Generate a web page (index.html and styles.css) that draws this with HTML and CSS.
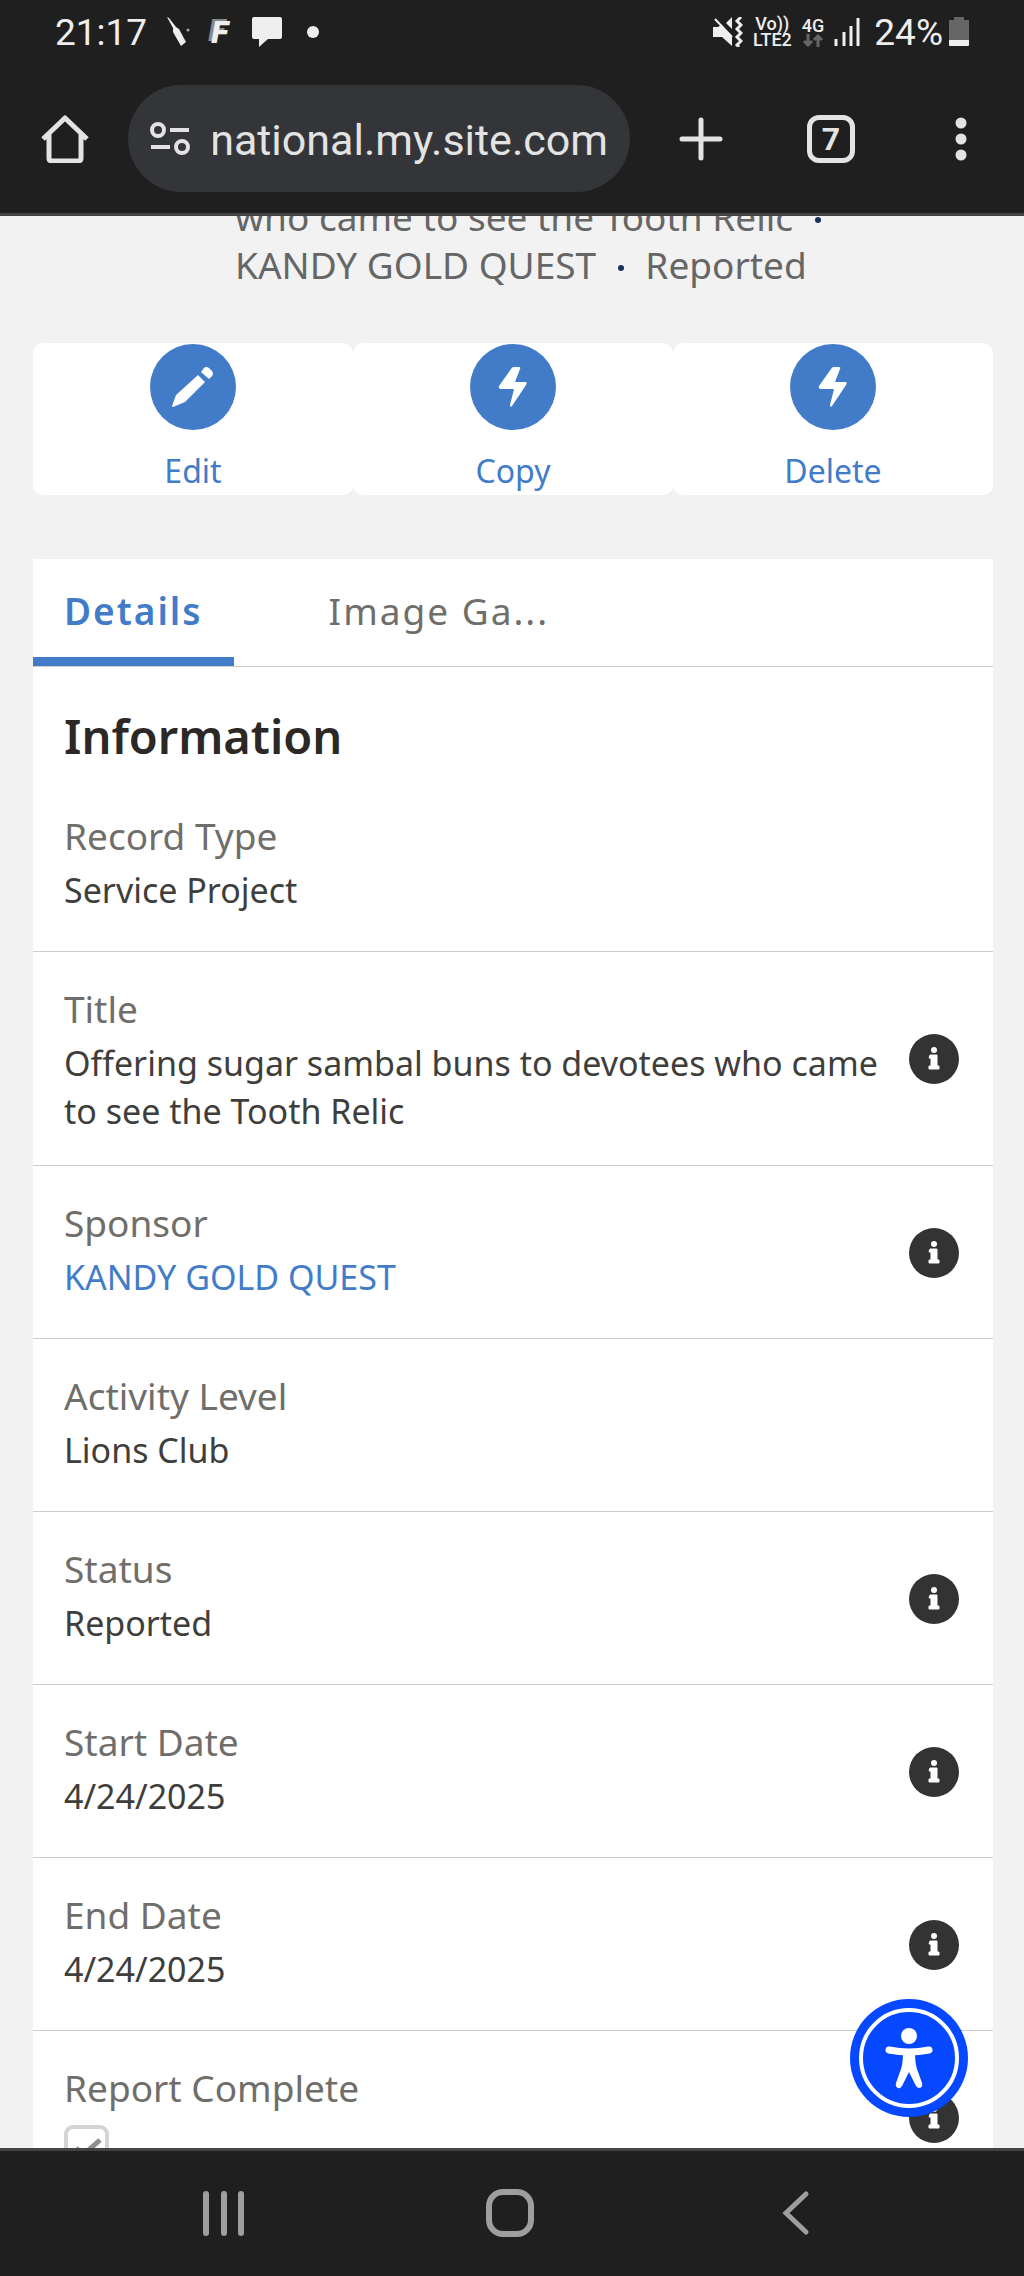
FILE: index.html
```html
<!DOCTYPE html>
<html lang="en">
<head>
    <meta charset="UTF-8">
    <meta name="viewport" content="width=device-width, initial-scale=1.0">
    <title>Service Project</title>
    <link rel="stylesheet" href="styles.css">
</head>
<body>
    <!-- shared icons -->
    <svg class="sprite" aria-hidden="true">
        <symbol id="info" viewBox="0 0 50 50">
            <circle cx="25" cy="25" r="25" fill="#333"/>
            <circle cx="25" cy="16" r="3" fill="#fff"/>
            <path d="M21 21h7v11h2v3H20v-3h2v-8h-2z" fill="#fff" stroke="#fff" stroke-linejoin="round"/>
        </symbol>
        <symbol id="bolt" viewBox="0 0 86 86">
            <path d="M44 23h5q2 0 1 2l-5 13h10q3 0 1 3L42 62q-2 2-2-1l4-16H31q-3 0-2-3l12-17q1-2 3-2z" fill="#fff"/>
        </symbol>
    </svg>

    <header class="top">
        <div class="status-bar">
            <span class="time">21:17</span>
            <svg class="s-pen" width="24" height="30" viewBox="0 0 24 30"><path d="M0 0L2 1 9 10 12 12 19 25 14 29 6 15 6 11z" fill="#eee"/><circle cx="21" cy="13" r="1.5" fill="#aaa"/></svg>
            <span class="s-f">F</span>
            <svg class="s-chat" width="30" height="30" viewBox="0 0 30 30"><path d="M2 0h26q2 0 2 2v18q0 2-2 2H16l-9 8v-8H2q-2 0-2-2V2q0-2 2-2z" fill="#eee"/></svg>
            <span class="s-dot"></span>
            <div class="status-right">
                <svg width="30" height="30" viewBox="0 0 30 30">
                    <path d="M0 10h5l3-2 11 11v10l-10-9H0zM13 6l6-6v12z" fill="#eee"/>
                    <path d="M2 2l17 18" stroke="#eee" stroke-width="2"/>
                    <path d="M28 0l-4 4 4 4-4 4 4 4-4 4 4 4-4 4 2 2" fill="none" stroke="#eee" stroke-width="3"/>
                </svg>
                <span class="lte"><span>Vo))</span><span>LTE2</span></span>
                <span class="net"><span>4G</span>
                    <svg width="20" height="13" viewBox="0 0 20 13"><path d="M5 0v11M1 7l4 4 4-4M15 13V2M11 6l4-4 4 4" fill="none" stroke="#666" stroke-width="3"/></svg>
                </span>
                <svg class="signal" width="26" height="28" viewBox="0 0 26 28"><path d="M2 28v-7M10 28V14M17 28V8M24 28V0" stroke="#eee" stroke-width="3"/></svg>
                <span class="time">24%</span>
                <svg class="battery" width="20" height="30" viewBox="0 0 20 30"><path d="M5 0h10v3h5v21H0V3h5z" fill="#666"/><path d="M0 23h20v5q0 1-1 1H1q-1 0-1-1z" fill="#eee"/></svg>
            </div>
        </div>
        <div class="toolbar">
            <button class="home-btn" aria-label="Home">
                <svg width="48" height="48" viewBox="0 0 48 48"><path d="M2 24L24 3l22 21M8 19v24q0 3 3 3h26q3 0 3-3V19" fill="none" stroke="#e3e3e3" stroke-width="5" stroke-linejoin="round"/></svg>
            </button>
            <div class="url-bar">
                <svg width="40" height="34" viewBox="0 0 40 34" fill="none" stroke="#e3e3e3" stroke-width="4"><circle cx="8" cy="8" r="6"/><path d="M20 8h19M1 25h19"/><circle cx="32" cy="25" r="6"/></svg>
                <input class="url" type="text" aria-label="Address" value="rnational.my.site.com">
            </div>
            <div class="toolbar-actions">
                <button aria-label="New tab"><svg width="44" height="44" viewBox="0 0 44 44"><path d="M22 3v38M3 22h38" stroke="#e3e3e3" stroke-width="5" stroke-linecap="round"/></svg></button>
                <button aria-label="Tabs"><span class="tab-count">7</span></button>
                <button aria-label="Menu"><svg width="12" height="44" viewBox="0 0 12 44" fill="#e3e3e3"><circle cx="6" cy="6" r="5.5"/><circle cx="6" cy="22" r="5.5"/><circle cx="6" cy="38" r="5.5"/></svg></button>
            </div>
        </div>
    </header>

    <main class="page">
        <p class="highlights">who came to see the Tooth Relic <b></b><br>KANDY GOLD QUEST <b></b> Reported</p>

        <div class="actions">
            <button class="action">
                <span class="action-icon"><svg width="86" height="86" viewBox="0 0 86 86"><path d="M48 31l7 7-20 20-12 5q-1 0-1-1l4-11zM51 28l3-4q2-2 5 0l3 3q2 3 0 5l-3 3z" fill="#fff"/></svg></span>
                Edit
            </button>
            <button class="action">
                <span class="action-icon"><svg width="86" height="86"><use href="#bolt"/></svg></span>
                Copy
            </button>
            <button class="action">
                <span class="action-icon"><svg width="86" height="86"><use href="#bolt"/></svg></span>
                Delete
            </button>
        </div>

        <section class="card">
            <div class="tabs" role="tablist">
                <button class="tab active" role="tab" aria-selected="true">Details</button>
                <button class="tab" role="tab" aria-selected="false">Image Ga...</button>
            </div>
            <h2>Information</h2>
            <div class="field">
                <div class="field-text"><div class="label">Record Type</div><div class="value">Service Project</div></div>
            </div>
            <div class="field">
                <div class="field-text"><div class="label">Title</div><div class="value">Offering sugar sambal buns to devotees who came to see the Tooth Relic</div></div>
                <button class="info" aria-label="Help Title"><svg width="50" height="50"><use href="#info"/></svg></button>
            </div>
            <div class="field">
                <div class="field-text"><div class="label">Sponsor</div><div class="value"><a href="#">KANDY GOLD QUEST</a></div></div>
                <button class="info" aria-label="Help Sponsor"><svg width="50" height="50"><use href="#info"/></svg></button>
            </div>
            <div class="field">
                <div class="field-text"><div class="label">Activity Level</div><div class="value">Lions Club</div></div>
            </div>
            <div class="field">
                <div class="field-text"><div class="label">Status</div><div class="value">Reported</div></div>
                <button class="info" aria-label="Help Status"><svg width="50" height="50"><use href="#info"/></svg></button>
            </div>
            <div class="field">
                <div class="field-text"><div class="label">Start Date</div><div class="value">4/24/2025</div></div>
                <button class="info" aria-label="Help Start Date"><svg width="50" height="50"><use href="#info"/></svg></button>
            </div>
            <div class="field">
                <div class="field-text"><div class="label">End Date</div><div class="value">4/24/2025</div></div>
                <button class="info" aria-label="Help End Date"><svg width="50" height="50"><use href="#info"/></svg></button>
            </div>
            <div class="field">
                <div class="field-text">
                    <label class="label" for="complete">Report Complete</label>
                    <div class="check">
                        <input type="checkbox" id="complete" checked disabled>
                        <svg class="tick" width="45" height="45" viewBox="0 0 45 45"><path d="M12 23l7 7 17-15" fill="none" stroke="#8e8e8e" stroke-width="5"/></svg>
                    </div>
                </div>
                <button class="info" aria-label="Help Report Complete"><svg width="50" height="50"><use href="#info"/></svg></button>
            </div>
        </section>
    </main>

    <nav class="bottom-nav">
        <button aria-label="Recent apps"><svg width="48" height="48" viewBox="0 0 48 48"><path d="M6 5v39M24 5v39M41 5v39" stroke="#9e9e9e" stroke-width="6" stroke-linecap="round"/></svg></button>
        <button aria-label="Home screen"><svg width="48" height="48" viewBox="0 0 48 48"><rect x="3" y="3" width="42" height="42" rx="14" fill="none" stroke="#9e9e9e" stroke-width="6"/></svg></button>
        <button aria-label="Back"><svg width="48" height="48" viewBox="0 0 48 48"><path d="M34 5L14 24l20 19" fill="none" stroke="#9e9e9e" stroke-width="5" stroke-linecap="round"/></svg></button>
    </nav>

    <button class="accessibility" aria-label="Accessibility">
        <svg width="118" height="118" viewBox="0 0 118 118">
            <circle cx="59" cy="59" r="59" fill="#0648ff"/>
            <circle cx="59" cy="59" r="48" fill="none" stroke="#fff" stroke-width="4"/>
            <circle cx="59" cy="37" r="8" fill="#fff"/>
            <path d="M39 51q20 4 40 0" fill="none" stroke="#fff" stroke-width="7" stroke-linecap="round"/>
            <path d="M53 53h12q0 11 2 17l5 14q1 4-2 5-3 0-4-2L59 73l-7 14q-2 3-4 2-3-1-2-5l5-14q2-6 2-17z" fill="#fff"/>
        </svg>
    </button>
</body>
</html>
```
FILE: styles.css
```css
* {
    box-sizing: border-box;
}
body {
    margin: 0;
    height: 100vh;
    display: flex;
    flex-direction: column;
    overflow: hidden;
    background-color: #f2f2f2;
    font-family: "Noto Sans", sans-serif;
}
button {
    padding: 0;
    border: none;
    background: none;
    font-family: inherit;
    cursor: pointer;
}
svg {
    display: block;
    flex-shrink: 0;
}
.sprite {
    display: none;
}

/* browser bars */
.top {
    background-color: #1f1f1f;
    border-bottom: 3px solid #444;
    font-family: Roboto, sans-serif;
    z-index: 1;
}
.status-bar {
    height: 64px;
    padding: 0 55px;
    display: flex;
    align-items: center;
    color: #eee;
}
.time {
    font-size: 37px;
}
.s-pen {
    margin-left: 20px;
}
.s-f {
    width: 27px;
    margin-left: 20px;
    font-size: 32px;
    font-weight: 900;
    font-style: italic;
    text-shadow: -3px -2px #888;
}
.s-chat {
    margin-left: 14px;
}
.s-dot {
    width: 12px;
    height: 12px;
    margin-left: 25px;
    border-radius: 50%;
    background-color: #eee;
}
.status-right {
    margin-left: auto;
    display: flex;
    align-items: center;
    gap: 10px;
}
.lte, .net {
    display: flex;
    flex-direction: column;
    align-items: center;
    font-size: 18px;
    font-weight: 500;
    line-height: 16px;
}
.signal {
    margin-right: 4px;
}
.battery {
    margin-left: -4px;
}
.toolbar {
    display: flex;
    align-items: center;
    padding: 21px 31px 21px 41px;
}
.url-bar {
    flex: 1;
    min-width: 0;
    height: 107px;
    margin: 0 39px;
    padding: 0 22px;
    display: flex;
    align-items: center;
    gap: 23px;
    border-radius: 54px;
    background-color: #343539;
}
/* long addresses keep their end in view */
.url {
    flex: 1;
    min-width: 0;
    padding: 2px 0 0;
    border: none;
    background: none;
    color: #e3e3e3;
    font-family: inherit;
    font-size: 43px;
    direction: rtl;
}
.toolbar-actions {
    display: flex;
    gap: 66px;
}
.toolbar-actions button {
    width: 64px;
    height: 64px;
    display: flex;
    align-items: center;
    justify-content: center;
}
.tab-count {
    width: 48px;
    height: 48px;
    border: 5px solid #e3e3e3;
    border-radius: 12px;
    color: #e3e3e3;
    font-family: Roboto, sans-serif;
    font-size: 32px;
    font-weight: bold;
    line-height: 38px;
}

/* record page, scrolled part way down */
.page {
    flex: 1;
    min-height: 0;
    padding: 0 31px 0 33px;
    overflow: hidden;
}
.highlights {
    margin: -23px 0 54px;
    padding-left: 202px;
    color: #666;
    font-size: 37px;
    line-height: 48px;
}
.highlights b {
    display: inline-block;
    width: 6px;
    height: 6px;
    margin: 0 12px 8px;
    border-radius: 50%;
    background-color: #16325c;
}
.actions {
    display: flex;
    margin-bottom: 64px;
}
.action {
    flex: 1;
    height: 152px;
    padding-top: 1px;
    display: flex;
    flex-direction: column;
    align-items: center;
    gap: 19px;
    border-radius: 10px;
    background-color: #fff;
    color: #427cc9;
    font-size: 32px;
    line-height: 44px;
}
.action-icon {
    border-radius: 50%;
    background-color: #427cc9;
}
.card {
    background-color: #fff;
}
.tabs {
    display: flex;
    border-bottom: 1px solid #ccc;
}
.tab {
    height: 107px;
    padding: 4px 31px 0;
    border-bottom: 9px solid transparent;
    color: #706e6b;
    font-size: 37px;
    letter-spacing: 2px;
}
.tab.active {
    margin-right: 64px;
    border-color: #427cc9;
    color: #427cc9;
    font-weight: 600;
}
h2 {
    margin: 0;
    padding: 37px 31px 11px;
    color: #2b2826;
    font-size: 47px;
    font-weight: 600;
    line-height: 64px;
}
.field {
    min-height: 173px;
    padding: 31px 34px 30px 31px;
    display: flex;
    gap: 16px;
    border-bottom: 1px solid #ccc;
}
.field-text {
    flex: 1;
}
.label {
    display: block;
    margin-bottom: 4px;
    color: #706e6b;
    font-size: 37px;
    line-height: 52px;
}
.value {
    color: #3e3e3c;
    font-size: 34px;
    line-height: 48px;
}
.value a {
    color: #427cc9;
    text-decoration: none;
}
.info {
    align-self: center;
}
.check {
    display: grid;
    width: 45px;
    margin-top: 11px;
}
.check input, .tick {
    grid-area: 1 / 1;
}
.check input {
    appearance: none;
    width: 45px;
    height: 45px;
    margin: 0;
    border: 4px solid #d4d4d4;
    border-radius: 9px;
    background-color: #fff;
}

.bottom-nav {
    height: 128px;
    padding: 0 85px 2px 81px;
    display: flex;
    justify-content: space-around;
    align-items: center;
    border-top: 3px solid #444;
    background-color: #1f1f1f;
    z-index: 1;
}
/* floats over the page */
.accessibility {
    position: fixed;
    right: 56px;
    bottom: 159px;
    z-index: 2;
}
```
